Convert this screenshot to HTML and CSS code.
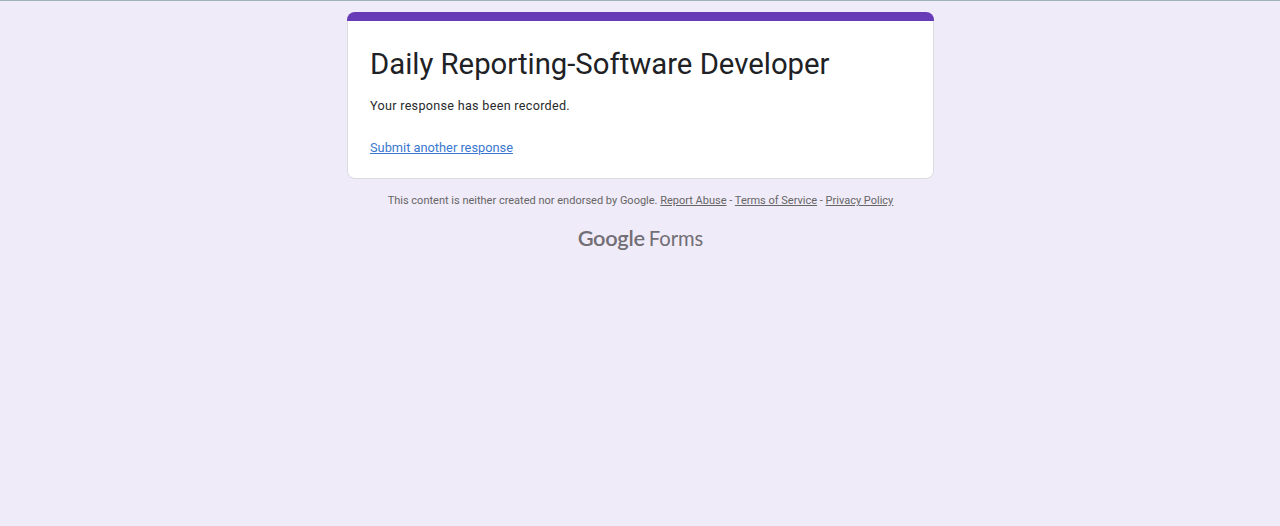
FILE: index.html
```html
<!DOCTYPE html>
<html lang="en">
<head>
<meta charset="utf-8">
<title>Daily Reporting-Software Developer</title>
<link rel="stylesheet" href="styles.css">
</head>
<body>
<main class="page">
  <section class="card">
    <div class="accent"></div>
    <div class="content">
      <h1 class="title">Daily Reporting-Software Developer</h1>
      <p class="message">Your response has been recorded.</p>
      <a class="again" href="#">Submit another response</a>
    </div>
  </section>
  <p class="notice">This content is neither created nor endorsed by Google. <a href="#">Report Abuse</a> - <a href="#">Terms of Service</a> - <a href="#">Privacy Policy</a></p>
  <div class="brand"><span class="google">Google</span><span class="forms">Forms</span></div>
</main>
</body>
</html>
```
FILE: styles.css
```css
body { margin: 0; min-height: 525px; border-top: 1px solid #9fb3b8; background: #f0ebf8; font-family: Roboto, sans-serif; }
.page { width: 587px; margin: 10.5px auto 0; padding-left: 1px; display: flex; flex-direction: column; align-items: center; }
.card { box-sizing: border-box; width: 587px; height: 167.5px; background: #fff; border: 1px solid #dadce0; border-radius: 8px; }
.accent { height: 9.5px; margin: -1px -1px 0; border-radius: 8px 8px 0 0; background: #673ab7; }
.content { padding: 23px 22px 0; }
.title { margin: 0; font-size: 29.3px; line-height: 40px; font-weight: 400; color: #202124; white-space: nowrap; }
.message { margin: 12px 0 0; font-size: 12.6px; line-height: 20px; letter-spacing: .3px; color: #292a2d; }
.again { display: inline-block; margin-top: 22px; font-size: 12.8px; line-height: 20px; color: #3a78d0; text-underline-offset: 1px; text-decoration-thickness: 1px; }
.notice { margin: 14px 0 0; font-size: 11px; line-height: 16px; color: #666; white-space: nowrap; }
.notice a { color: inherit; }
.brand { display: flex; align-items: baseline; gap: 4px; margin-top: 16px; font-family: Lato, sans-serif; line-height: 26px; color: #716e75; }
.google { font-size: 21.8px; font-weight: 600; letter-spacing: -.3px; }
.forms { font-size: 20.2px; }
```
